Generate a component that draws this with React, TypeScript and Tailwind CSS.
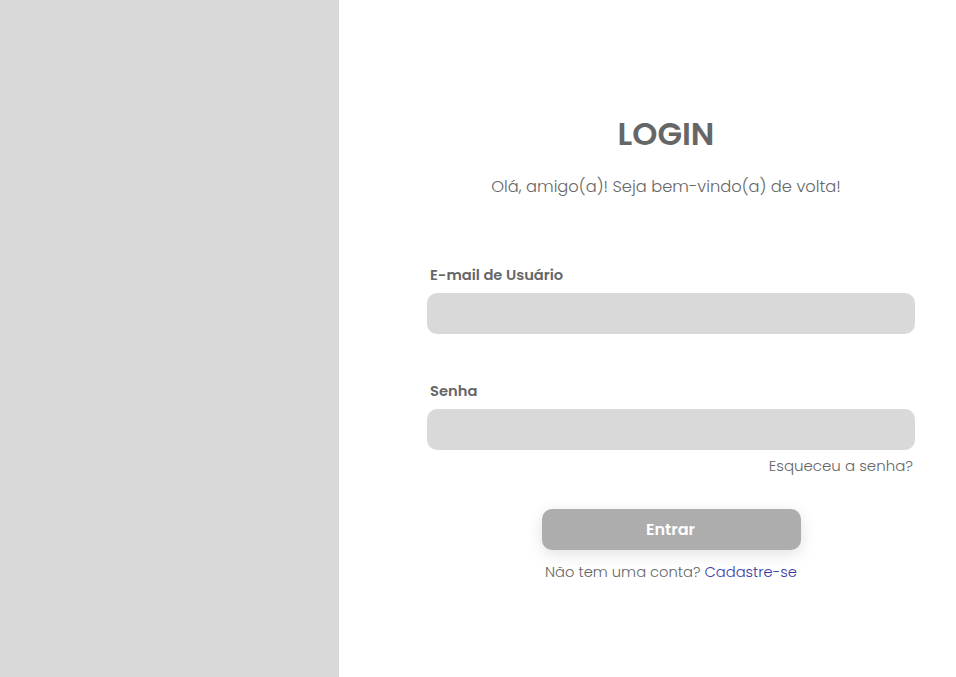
export default function App() {
  return (
    <div className="flex h-[677px] w-full bg-white font-['Poppins','Inter',sans-serif] text-[#666666]">
      {/* Left image placeholder */}
      <div className="h-full w-[339px] shrink-0 bg-[#d9d9d9]" />

      {/* Login form */}
      <div className="flex-1 pl-[88px] pr-[41px] pt-[114px]">
        <div className="flex w-[488px] flex-col">
          <h1 className="pr-[10px] text-center text-[32px] font-semibold leading-[40px]">LOGIN</h1>
          <p className="mt-[21px] pr-[10px] text-center text-[16.3px] font-light leading-[24px]">
            Olá, amigo(a)! Seja bem-vindo(a) de volta!
          </p>

          <label className="mt-[65px] pl-[3px] text-[14.7px] font-semibold leading-[22px]">E-mail de Usuário</label>
          <input type="email" className="mt-[7px] h-[41px] w-full rounded-[10px] bg-[#d9d9d9] px-4 outline-none" />

          <label className="mt-[46px] pl-[3px] text-[14.7px] font-semibold leading-[22px]">Senha</label>
          <input type="password" className="mt-[7px] h-[41px] w-full rounded-[10px] bg-[#d9d9d9] px-4 outline-none" />

          <a className="mt-[5px] self-end pr-[2px] text-[15px] font-light leading-[22px]">Esqueceu a senha?</a>

          <button className="mt-[32px] h-[41px] w-[259px] self-center rounded-[10px] bg-[#adadad] pr-[1px] text-[16px] font-semibold text-white shadow-[0_4px_16px_rgba(0,0,0,0.12)]">
            Entrar
          </button>

          <p className="mt-[11px] text-center text-[14.7px] font-light leading-[22px]">
            Não tem uma conta? <a className="text-[#3b3ba6]">Cadastre-se</a>
          </p>
        </div>
      </div>
    </div>
  );
}
